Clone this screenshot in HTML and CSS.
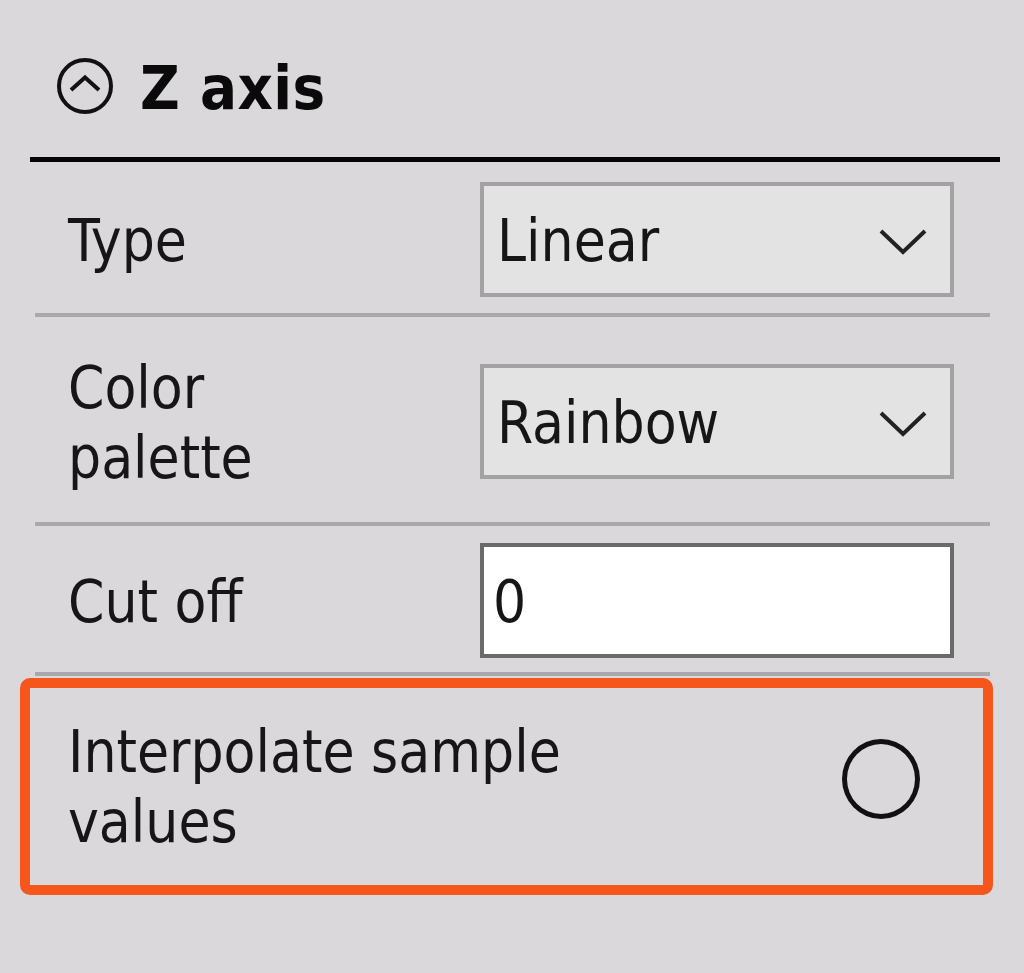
FILE: index.html
```html
<!DOCTYPE html>
<html lang="en">
<head>
<meta charset="utf-8">
<title>Z axis</title>
<link rel="stylesheet" href="styles.css">
</head>
<body>
<div class="panel">
  <div class="header">
    <svg class="collapse-icon" width="58" height="58" viewBox="0 0 58 58" aria-hidden="true">
      <circle cx="29" cy="29" r="26" fill="none" stroke="#111" stroke-width="4"/>
      <polyline points="15,33 29,20.5 43,33" fill="none" stroke="#111" stroke-width="4" stroke-linejoin="miter"/>
    </svg>
    <span class="title">Z axis</span>
  </div>
  <div class="rows">
    <div class="row row-type">
      <div class="label">Type</div>
      <div class="select"><span class="value">Linear</span>
        <svg class="chev" width="50" height="28" viewBox="0 0 50 28" aria-hidden="true"><polyline points="3,4 25,25 47,4" fill="none" stroke="#222" stroke-width="4"/></svg>
      </div>
    </div>
    <div class="row row-palette">
      <div class="label">Color palette</div>
      <div class="select"><span class="value">Rainbow</span>
        <svg class="chev" width="50" height="28" viewBox="0 0 50 28" aria-hidden="true"><polyline points="3,4 25,25 47,4" fill="none" stroke="#222" stroke-width="4"/></svg>
      </div>
    </div>
    <div class="row row-cutoff">
      <div class="label">Cut off</div>
      <div class="input"><span class="value">0</span></div>
    </div>
  </div>
  <div class="highlight">
    <div class="label wide">Interpolate sample values</div>
    <span class="radio" aria-hidden="true"></span>
  </div>
</div>
</body>
</html>
```
FILE: styles.css
```css
html, body {
  margin: 0;
  padding: 0;
  background: #dad8db;
}
body {
  width: 1024px;
  height: 973px;
  font-family: "DejaVu Sans Condensed", "DejaVu Sans", sans-serif;
  font-size: 58px;
  color: #161616;
}
.panel {
  display: flex;
  flex-direction: column;
}
.header {
  margin: 0 24px 0 30px;
  height: 162px;
  box-sizing: border-box;
  border-bottom: 5px solid #050505;
  display: flex;
  align-items: center;
  gap: 26px;
  padding: 15px 0 0 26px;
}
.collapse-icon {
  flex: none;
}
.title {
  font-weight: bold;
  font-size: 61px;
  letter-spacing: 0.5px;
  color: #0a0a0a;
  line-height: 70px;
  padding-top: 4px;
}
.rows {
  margin: 0 34px 0 35px;
  display: flex;
  flex-direction: column;
}
.row {
  display: flex;
  align-items: center;
  justify-content: space-between;
  padding: 0 36px 0 33px;
  border-bottom: 4px solid #a9a9aa;
}
.row-type { height: 151px; }
.row-palette { height: 205px; }
.row-cutoff { height: 146px; }
.label {
  width: 300px;
  line-height: 70px;
  padding-top: 6px;
}
.label.wide {
  width: 600px;
  padding-top: 0;
}
.select, .input {
  width: 474px;
  height: 115px;
  box-sizing: border-box;
  display: flex;
  align-items: center;
  justify-content: space-between;
}
.select {
  background: #e3e3e3;
  border: 4px solid #a2a2a2;
  padding: 0 22px 0 13px;
  margin-top: 3px;
}
.chev {
  margin-top: 4px;
}
.input {
  background: #ffffff;
  border: 4px solid #6a6a6a;
  padding: 0 9px 0 9px;
  margin-top: 2px;
}
.value {
  line-height: 70px;
  padding-top: 4px;
}
.highlight {
  margin: 2px 31px 0 20px;
  height: 217px;
  box-sizing: border-box;
  border: 10px solid #f4561c;
  border-radius: 10px;
  display: flex;
  align-items: center;
  justify-content: space-between;
  padding: 0 63px 0 38px;
}
.radio {
  width: 78px;
  height: 80px;
  box-sizing: border-box;
  border: 5px solid #111;
  border-radius: 50%;
  margin-top: -16px;
}
```
